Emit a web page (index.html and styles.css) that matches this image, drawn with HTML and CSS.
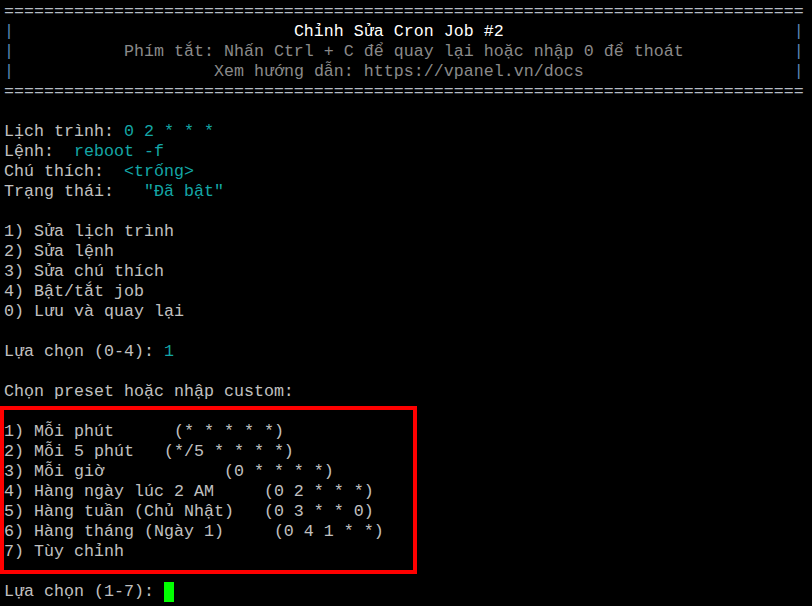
FILE: index.html
```html
<!DOCTYPE html>
<html lang="vi">
<head>
<meta charset="utf-8">
<title>Chỉnh Sửa Cron Job #2</title>
<link rel="stylesheet" href="styles.css">
</head>
<body>
<div class="term">
<pre class="screen"><span class="rule">================================================================================</span>
<span class="pipe">|</span>                            <span class="title">Chỉnh Sửa Cron Job #2</span>                             <span class="pipe">|</span>
<span class="pipe">|</span>           <span class="dim">Phím tắt: Nhấn Ctrl + C để quay lại hoặc nhập 0 để thoát</span>           <span class="pipe">|</span>
<span class="pipe">|</span>                    <span class="dim">Xem hướng dẫn: https://vpanel.vn/docs</span>                     <span class="pipe">|</span>
<span class="rule">================================================================================</span>

Lịch trình: <span class="val">0 2 * * *</span>
Lệnh:  <span class="val">reboot -f</span>
Chú thích:  <span class="val">&lt;trống&gt;</span>
Trạng thái:   <span class="val">"Đã bật"</span>

1) Sửa lịch trình
2) Sửa lệnh
3) Sửa chú thích
4) Bật/tắt job
0) Lưu và quay lại

Lựa chọn (0-4): <span class="val">1</span>

Chọn preset hoặc nhập custom:

1) Mỗi phút      (* * * * *)
2) Mỗi 5 phút   (*/5 * * * *)
3) Mỗi giờ            (0 * * * *)
4) Hàng ngày lúc 2 AM     (0 2 * * *)
5) Hàng tuần (Chủ Nhật)   (0 3 * * 0)
6) Hàng tháng (Ngày 1)     (0 4 1 * *)
7) Tùy chỉnh

Lựa chọn (1-7): <span class="cursor"> </span></pre>
<div class="highlight"></div>
</div>
</body>
</html>
```

FILE: styles.css
```css
html, body {
  margin: 0;
  padding: 0;
  background: #000000;
}

body {
  width: 812px;
  height: 606px;
  overflow: hidden;
}

.term {
  position: relative;
  padding: 2px 0 0 4px;
}

.screen {
  margin: 0;
  font-family: "Liberation Mono", "Courier New", monospace;
  font-size: 16.6667px;
  line-height: 20px;
  color: #c0c0c0;
  white-space: pre;
}

.rule {
  color: #b4bcc6;
}

.pipe {
  color: #5a86b4;
}

.title {
  color: #ffffff;
}

.dim {
  color: #8a8a8a;
}

.val {
  color: #14a6a6;
}

.cursor {
  display: inline-block;
  width: 10px;
  height: 20px;
  vertical-align: top;
  background: #00ff00;
}

.highlight {
  position: absolute;
  left: 0;
  top: 406px;
  width: 409px;
  height: 160px;
  border: 4px solid #ff0000;
}
```
